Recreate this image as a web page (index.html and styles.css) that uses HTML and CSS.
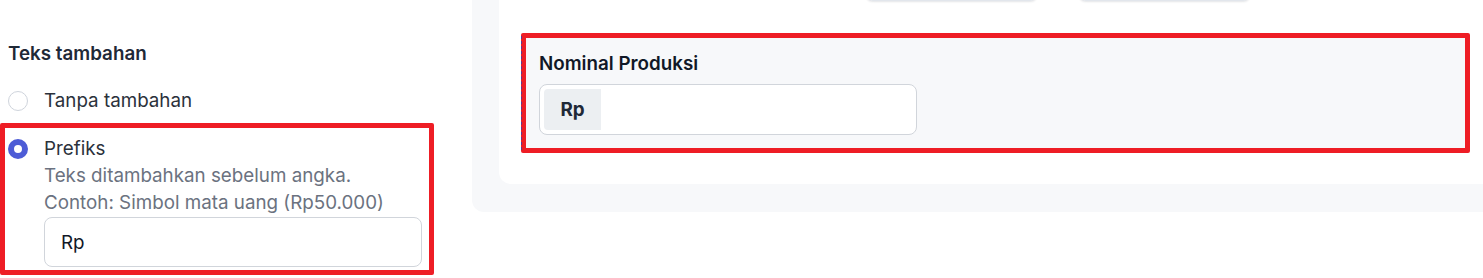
FILE: index.html
```html
<!DOCTYPE html>
<html lang="id">
<head>
  <meta charset="UTF-8">
  <meta name="viewport" content="width=device-width, initial-scale=1.0">
  <title>Pengaturan Field Nominal</title>
  <link rel="stylesheet" href="styles.css">
</head>
<body>

<div class="page">

  <!-- Settings column -->
  <div class="settings">
    <h3 class="settings-title">Teks tambahan</h3>

    <div class="option">
      <span class="radio"></span>
      <div class="option-body">
        <div class="option-label">Tanpa tambahan</div>
      </div>
    </div>

    <div class="option option-marked">
      <span class="radio radio-checked"></span>
      <div class="option-body">
        <div class="option-label">Prefiks</div>
        <div class="option-hint">Teks ditambahkan sebelum angka.</div>
        <div class="option-hint">Contoh: Simbol mata uang (Rp50.000)</div>
        <input type="text" class="text-input" value="Rp">
      </div>
    </div>
  </div>

  <!-- Preview -->
  <div class="preview">
    <div class="preview-card">
      <div class="preview-actions">
        <button type="button" class="ghost-btn"></button>
        <button type="button" class="ghost-btn"></button>
      </div>

      <div class="field-box">
        <label class="field-label" for="nominal">Nominal Produksi</label>
        <div class="addon-input">
          <span class="addon">Rp</span>
          <input type="text" id="nominal" class="addon-field">
        </div>
      </div>
    </div>
  </div>

</div>

</body>
</html>
```

FILE: styles.css
```css
body {
  margin: 0;
  font-family: Inter, "Noto Sans", sans-serif;
  color: #1f2937;
  background: #ffffff;
}

.page {
  display: flex;
  align-items: flex-start;
}

/* settings column */
.settings {
  width: 464px;
  padding: 40px 0 0 8px;
}

.settings-title {
  margin: 0 0 20px;
  font-size: 18.8px;
  font-weight: 600;
  line-height: 27px;
  color: #1f2937;
}

.option {
  display: flex;
  gap: 16px;
  margin-bottom: 21px;
}

.option-marked {
  position: relative;
}

.option-marked::after {
  content: "";
  position: absolute;
  top: -12px;
  left: -8px;
  right: 38px;
  bottom: -8px;
  border: 5px solid #ee1d25;
  border-radius: 2px;
  pointer-events: none;
}

.radio {
  flex: none;
  width: 20px;
  height: 20px;
  margin-top: 3.5px;
  box-sizing: border-box;
  border: 1.5px solid #cfd4dc;
  border-radius: 50%;
  background: #fff;
}

.radio-checked {
  border: 6.5px solid #4d5cd6;
  background: #fff;
}

.option-label {
  font-size: 18.8px;
  line-height: 27px;
  color: #2b313b;
}

.option-hint {
  font-size: 18.8px;
  line-height: 27px;
  color: #6b7280;
}

.text-input {
  display: block;
  width: 378px;
  height: 50px;
  box-sizing: border-box;
  padding: 0 16px;
  margin-top: 1px;
  border: 1px solid #d1d5db;
  border-radius: 8px;
  font-family: inherit;
  font-size: 18.8px;
  color: #111827;
}

/* preview panel */
.preview {
  flex: 1;
  background: #f7f8fa;
  padding: 0 0 28px 27px;
  border-bottom-left-radius: 12px;
}

.preview-card {
  background: #fff;
  padding: 0 13px 31px 22px;
  border-bottom-left-radius: 12px;
}

.preview-actions {
  display: flex;
  gap: 40px;
  padding-left: 344px;
  margin-top: -39px;
}

.ghost-btn {
  width: 173px;
  height: 40px;
  background: #fff;
  border: 1px solid #e2e6ec;
  border-radius: 8px;
  box-shadow: 0 1px 2px rgba(30, 41, 59, 0.12);
}

.field-box {
  position: relative;
  margin-top: 32px;
  padding: 14px 13px 13px;
  background: #f7f8fa;
  border: 5px solid #ee1d25;
  border-radius: 2px;
}

.field-box::before {
  content: "";
  position: absolute;
  top: -2px;
  bottom: -2px;
  left: -5px;
  border-left: 1px dashed #5b3a8f;
}

.field-label {
  display: block;
  margin-bottom: 8px;
  font-size: 18.8px;
  font-weight: 600;
  line-height: 24px;
  color: #111827;
}

.addon-input {
  display: flex;
  width: 378px;
  height: 51px;
  box-sizing: border-box;
  padding: 4px;
  background: #fff;
  border: 1px solid #d1d5db;
  border-radius: 8px;
}

.addon {
  display: flex;
  align-items: center;
  justify-content: center;
  width: 57px;
  background: #eceff2;
  border-radius: 4px 0 0 4px;
  font-size: 18.8px;
  font-weight: 700;
  color: #1f2937;
}

.addon-field {
  flex: 1;
  min-width: 0;
  border: none;
  outline: none;
  background: transparent;
  font-family: inherit;
  font-size: 18.8px;
}
```
